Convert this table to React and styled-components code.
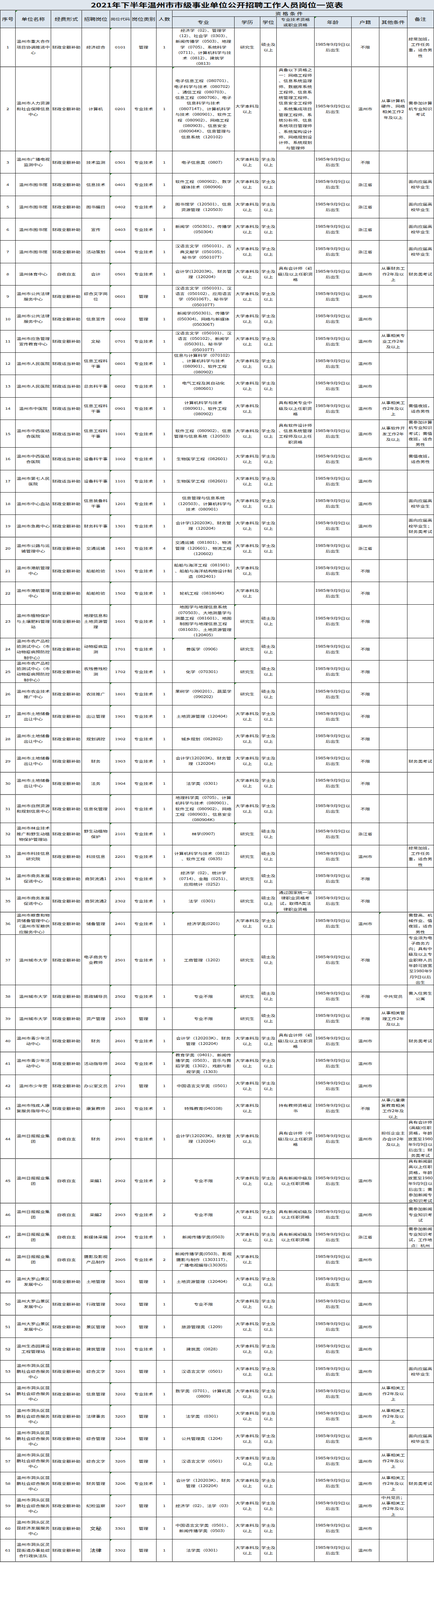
import React from 'react';
import styled, { createGlobalStyle, css } from 'styled-components';

const GlobalStyle = createGlobalStyle`
  html, body {
    margin: 0;
    padding: 0;
    background: #fff;
  }
  body {
    font-family: "Noto Sans CJK SC", "Noto Sans", sans-serif;
    color: #0c0c0c;
  }
`;

// the capture frame only gets 4000px of height, so vertical sizes are
// measured off the sheet and scaled into it; widths stay as measured
const S = 4000 / 5308;
const K = 0.68; // glyphs in the sheet are squat
const LINE = 19.02 * S;
const COLS = '39px 91px 79px 71.5px 54px 65.5px 41px 159px 66px 42px 96.5px 95px 71.5px 71.5px 68px';

const Page = styled.div`
  width: 1112px;
  overflow: hidden;
`;

const Text = styled.span`
  display: inline-block;
  line-height: ${LINE / K}px;
  transform: scaleY(${K});
  white-space: pre;
  text-align: center;
`;

const Title = styled.h1`
  margin: 0;
  height: ${33 * S}px;
  display: flex;
  align-items: center;
  justify-content: center;
  overflow: hidden;
  background: #dfe6ee;
  font-size: 22.8px;
  font-weight: 700;
  color: #0a0a0a;
`;

const Head = styled.div`
  display: grid;
  grid-template-columns: ${COLS};
  grid-template-rows: ${22 * S}px 1fr;
  height: ${62 * S}px;
  box-sizing: border-box;
  overflow: hidden;
  background: #dde6ef;
  border-top: 2px solid #7d7d7d;
  border-left: 1px solid #1a1a1a;
  border-bottom: 1px solid #1a1a1a;
`;

const mark = css`
  &::before {
    content: '';
    position: absolute;
    top: 0;
    left: 0;
    border-top: 4px solid #2f8f2f;
    border-right: 5px solid transparent;
  }
`;

const HeadCell = styled.div`
  position: relative;
  grid-column: ${p => p.$col};
  grid-row: ${p => p.$row};
  min-height: 0;
  display: flex;
  align-items: center;
  justify-content: center;
  border-right: 1px solid #1a1a1a;
  border-bottom: ${p => (p.$under ? '1px solid #1a1a1a' : 'none')};
  font-size: ${p => (p.$small ? '12.4px' : '15px')};
  letter-spacing: ${p => (p.$spaced ? '3.5px' : '0')};
  ${p => p.$mark && mark}
`;

const Row = styled.div`
  display: grid;
  grid-template-columns: ${COLS};
  grid-template-rows: 100%;
  height: ${p => p.$h}px;
  box-sizing: border-box;
  overflow: hidden;
  border-left: 1px solid #1a1a1a;
  border-bottom: ${p => (p.$thick ? '2px solid #6b6b6b' : '1px solid #1a1a1a')};
`;

const Cell = styled.div`
  position: relative;
  min-height: 0;
  display: flex;
  align-items: center;
  justify-content: center;
  border-right: 1px solid #1a1a1a;
  font-size: ${p => (p.$big ? '15px' : '12.2px')};
  ${p => p.$mark && mark}
`;

const AGE = '1985年9月9日以|后出生';
const BK = '大学本科及|以上';
const XS = '学士及|以上';
const SS = '硕士及|以上';
const QE = '财政全额补助';
const QS = '财政适当补助';
const ZS = '自收自支';
const JS = '专业技术';
const GL = '管理';
const YJS = '研究生';
const WZ = '温州市';
const BX = '不限';
const ZJ = '浙江省';
const GRAD = '面向应届高|校毕业生';
const WORK2 = '从事相关工|作2年及以|上';
const CW = '财务类考试';

const LAND = '温州市土地储备|出让中心';
const NCP = '温州市农产品检|验测试中心（市|动物疫病预防控|制中心）';
const KP = '温州市洞头区昆|鹏社会综合服务|中心';
const RB = '温州日报报业集|团';
const DLS = '温州大罗山景区|发展中心';

const ROWS = [
  ['1', '温州市重大合作|项目协调推进中|心', QE, '经济综合', '0101', GL, '1', '经济学（02）、管理学|（12）、社会学（0303）、|新闻传播学（0503）、地理|学（0705）、系统科学|（0711）、计算机科学与技|术（0812）、建筑学|（0813）', YJS, SS, '', AGE, BX, '', '经常加班，|工作任务|重，适合男|性'],
  ['2', '温州市人力资源|和社会保障信息|中心', QE, '计算机', '0201', JS, '1', '电子信息工程（080701）、|电子科学与技术（080702）|、通信工程（080703）、|信息工程（080706）、电子|信息科学与技术|（080714T）、计算机科学|与技术（080901）、软件工|程（080902）、网络工程|（080903）、信息安全|（080904K）、信息管理与|信息系统（120102）', BK, '', '具备以下资格之|一：网络工程师|、信息系统监理|师、数据库系统|工程师、信息系|统管理工程师、|信息安全工程师|、系统集成项目|管理工程师、系|统分析师、信息|系统项目管理师|、系统架构设计|师、网络规划设|计师、系统规划|与管理师', AGE, WZ, '从事计算机|硬件、网络|相关工作2|年及以上', '需参加计算|机专业知识|考试'],
  ['3', '温州市广播电视|监测中心', QE, '技术监测', '0301', JS, '1', '电子信息类（0807）', BK, XS, '', AGE, BX, '', ''],
  ['4', '温州市图书馆', QE, '信息技术', '0401', JS, '1', '软件工程（080902）、数字|媒体技术（080906）', BK, XS, '', AGE, ZJ, '', GRAD],
  ['5', '温州市图书馆', QE, '图书编目', '0402', JS, '2', '图书馆学（120501）、信息|资源管理（120503）', BK, XS, '', AGE, ZJ, '', GRAD],
  ['6', '温州市图书馆', QE, '宣传', '0403', JS, '1', '新闻学（050301）、传播学|（050304）', BK, XS, '', AGE, ZJ, '', GRAD],
  ['7', '温州市图书馆', QE, '活动策划', '0404', JS, '1', '汉语言文学（050101）、古|典文献学（050105）、|秘书学（050107T）', BK, XS, '', AGE, ZJ, '', GRAD],
  ['8', '温州体育中心', ZS, '会计', '0501', JS, '1', '会计学(120203K)、 财务管|理（120204）', BK, XS, '具有会计师（初|级)及以上任职资|格', AGE, WZ, '从事财务工|作2年及以|上', CW],
  ['9', '温州市公共法律|服务中心', QE, '综合文字岗|位', '0601', GL, '1', '汉语言文学（050101）、汉|语言（050102）、应用语言|学（050106T）、秘书学|（050107T）', BK, XS, '', AGE, WZ, '', ''],
  ['10', '温州市公共法律|服务中心', QE, '信息宣传', '0602', GL, '1', '新闻学(050301)、传播学|(050304)、网络与新媒体|(050306T)', BK, XS, '', AGE, WZ, '', ''],
  ['11', '温州市应急管理|宣传教育中心', QE, '文秘', '0701', JS, '1', '汉语言文学（050101）、汉|语言（050102）、新闻学|(050301)、秘书学|(050107T)', BK, XS, '', AGE, WZ, '从事相关专|业工作2年|及以上', ''],
  ['12', '温州市人民医院', QS, '信息工程科|干事', '0801', JS, '1', '信息与计算科学（070102）|、计算机科学与技术|（080901）、软件工程|（080902）', BK, XS, '', AGE, WZ, '', ''],
  ['13', '温州市人民医院', QS, '总务科干事', '0802', JS, '1', '电气工程及其自动化|（080601）', BK, XS, '', AGE, WZ, '', ''],
  ['14', '温州市中医院', QS, '信息工程科|干事', '0901', JS, '1', '计算机科学与技术|（080901）、软件工程|（080902）', BK, '', '具有相关专业中|级及以上任职资|格', AGE, WZ, WORK2, '需值夜班，|适合男性'],
  ['15', '温州市中西医结|合医院', QS, '信息工程科|干事', '1001', JS, '1', '软件工程（080902）、信息|管理与信息系统（120503）', BK, XS, '具有软件设计师|、信息系统管理|工程师及以上任|职资格', AGE, WZ, '从事软件开|发工作2年|及以上', '需参加计算|机专业知识|考试；需值|夜班，适合|男性'],
  ['16', '温州市中西医结|合医院', QS, '设备科干事', '1002', JS, '1', '生物医学工程（082601）', BK, XS, '', AGE, WZ, '', '需值夜班，|适合男性'],
  ['17', '温州市第七人民|医院', QS, '设备科干事', '1101', JS, '1', '生物医学工程（082601）', BK, XS, '', AGE, WZ, '', ''],
  ['18', '温州市中心血站', QE, '信息装备科|干事', '1201', JS, '1', '信息管理与信息系统|（120503）、计算机科学与|技术（080901）', BK, XS, '', AGE, WZ, '', GRAD],
  ['19', '温州市急救中心', QE, '财务科干事', '1301', JS, '1', '会计学(120203K)、财务管|理（120204）', BK, XS, '', AGE, WZ, '', '面向应届高|校毕业生；|财务类考试'],
  ['20', '温州市公路与运|输管理中心', QE, '交通运输', '1401', JS, '4', '交通运输（081801）、物流|管理（120601）、物流工程|（120602）', BK, XS, '', AGE, ZJ, '', ''],
  ['21', '温州市港航管理|中心', QE, '船舶检验', '1501', JS, '1', '船舶与海洋工程（081901）|、船舶与海洋结构物设计制|造（082401）', BK, '', '', AGE, BX, '', ''],
  ['22', '温州市港航管理|中心', QE, '船舶检验', '1502', JS, '1', '轮机工程（081804K）', BK, '', '', AGE, BX, '', ''],
  ['23', '温州市植物保护|与土壤肥料管理|站', QE, '地理信息和|土地资源管|理', '1601', JS, '1', '地图学与地理信息系统|（070503）、大地测量学与|测量工程（081601）、地图|制图学与地理信息工程|（081603）、土地资源管理|（120405）', YJS, SS, '', AGE, BX, '', ''],
  ['24', NCP, QE, '动物疫病监|测', '1701', JS, '1', '兽医学（0906）', YJS, SS, '', AGE, BX, '', ''],
  ['25', NCP, QE, '农残兽残检|测', '1702', JS, '1', '化学（070301）', YJS, SS, '', AGE, BX, '', ''],
  ['26', '温州市农业技术|推广中心', QE, '农技推广', '1801', JS, '1', '果树学（090201）、蔬菜学|（090202）', YJS, SS, '', AGE, BX, '', ''],
  ['27', LAND, QE, '出让管理', '1901', JS, '1', '土地资源管理（120404）', BK, XS, '', AGE, BX, '', ''],
  ['28', LAND, QE, '规划调控', '1902', JS, '1', '城乡规划（082802）', BK, XS, '', AGE, BX, '', ''],
  ['29', LAND, QE, '财务', '1903', JS, '1', '会计学(120203K)、财务管|理（120204）', BK, XS, '', AGE, BX, '', CW],
  ['30', LAND, QE, '法务', '1904', JS, '1', '法学类（0301）', BK, XS, '', AGE, BX, '', ''],
  ['31', '温州市自然资源|和规划信息中心', QE, '信息化管理', '2001', JS, '1', '地理科学类（0705）、计算|机科学与技术（080901）、|软件工程（080902）、网络|工程（080903）、信息安全|（080904K）', BK, XS, '', AGE, BX, '', ''],
  ['32', '温州市林业技术|推广和野生动植|物保护管理站', QE, '野生动植物|保护', '2101', JS, '1', '林学(0907)', YJS, SS, '', AGE, ZJ, '', ''],
  ['33', '温州市科技信息|研究院', QE, '科技信息', '2201', JS, '1', '计算机科学与技术（0812）|、软件工程（0835）', YJS, SS, '', AGE, WZ, '', '经常加班，|工作任务|重，适合男|性'],
  ['34', '温州市商务发展|促进中心', QE, '商贸流通1', '2301', JS, '3', '经济学（02）、统计学|（0714）、金融（0251）、|应用统计（0252）', YJS, SS, '', AGE, BX, '', ''],
  ['35', '温州市商务发展|促进中心', QE, '商贸流通2', '2302', JS, '1', '法学（0301）', YJS, SS, '通过国家统一法|律职业资格考|试，取得A类法|律职业资格', AGE, BX, '', ''],
  ['36', '温州市粮食和物|资储备管理中心|（温州市军粮供|应服务中心）', QE, '储备管理', '2401', JS, '1', '经济学类(0201)', BK, XS, '', AGE, WZ, '', '需登高、机|械作业、值|夜班，适合|男性'],
  ['37', '温州城市大学', QE, '电子商务专|业教师', '2501', JS, '1', '工商管理（1202）', YJS, SS, '', AGE, BX, '', '专业须为电|子商务方|向；具有中|级及以上专|业职称人员|年龄可放宽|至1980年9|月9日以后|出生'],
  ['38', '温州城市大学', QE, '思政辅导员', '2502', JS, '1', '专业不限', YJS, SS, '', AGE, BX, '中共党员', '需入住男生|公寓'],
  ['39', '温州城市大学', QE, '资产管理', '2503', GL, '1', '专业不限', YJS, SS, '', AGE, BX, '从事相关管|理工作2年|及以上', ''],
  ['40', '温州市青少年活|动中心', QE, '财务', '2601', JS, '1', '会计学（120203K）、财务|管理（120204）', BK, XS, '具有会计师（初|级)及以上任职资|格', AGE, WZ, '', CW],
  ['41', '温州市青少年活|动中心', QE, '活动指导师', '2602', JS, '1', '教育学类（0401）、新闻传|播学类（0503）、音乐与舞|蹈学类（1302）、戏剧与影|视学类（1303）', BK, XS, '', AGE, WZ, '', ''],
  ['42', '温州市少年宫', QE, '办公室文员', '2701', GL, '1', '中国语言文学类（0501）', BK, XS, '', AGE, WZ, '', ''],
  ['43', '温州市残疾人康|复服务指导中心', QE, '康复教师', '2801', JS, '1', '特殊教育(040108)', BK, '', '持有教师资格证|书', AGE, BX, '从事儿童康|复教育相关|工作2年及|以上', ''],
  ['44', RB, ZS, '财务', '2901', JS, '1', '会计学(120203K)、财务管|理（120204）', BK, '', '具有会计师（中|级)及以上任职资|格', AGE, WZ, '担任企业主|办会计2年|及以上', '具有会计师|(高级)任职|资格，年龄|放宽至1980|年9月9日以|后出生；财|务类考试'],
  ['45', RB, ZS, '采编1', '2902', JS, '2', '专业不限', BK, XS, '具有新闻中级及|以上任职资格', AGE, WZ, '', '具有新闻副|高以上任职|资格，年龄|放宽至1980|年9月9日以|后出生；需|参加新闻专|业知识考试'],
  ['46', RB, ZS, '采编2', '2903', JS, '2', '专业不限', BK, XS, '具有新闻初级及|以上任职资格', AGE, WZ, '', '需参加新闻|专业知识考|试'],
  ['47', RB, ZS, '新媒体采编', '2904', JS, '1', '新闻传播学类(0503)', BK, XS, '具有新闻初级及|以上任职资格', AGE, ZJ, '', '需参加新闻|专业知识考|试，工作地|点：杭州'],
  ['48', RB, ZS, '摄影及影视|产品制作', '2905', JS, '2', '新闻传播学类(0503)、影视|摄影与制作（130311T）、|广播电视编导(130305)', BK, '', '', AGE, WZ, '', ''],
  ['49', DLS, QE, '土地管理', '3001', GL, '1', '土地资源管理（120404）', BK, XS, '', AGE, WZ, '', ''],
  ['50', DLS, QE, '行政管理', '3002', GL, '1', '专业不限', BK, XS, '', AGE, WZ, '', ''],
  ['51', DLS, QE, '景区管理', '3003', GL, '1', '旅游管理类（1209）', BK, XS, '', AGE, WZ, '', ''],
  ['52', '温州生态园建设|工程管理站', QE, '建筑管理', '3101', JS, '1', '建筑类（0828）', BK, XS, '', AGE, WZ, '', ''],
  ['53', KP, QE, '综合文字', '3201', GL, '1', '汉语言文学（0501）', BK, XS, '', AGE, WZ, '', GRAD],
  ['54', KP, QE, '信息管理', '3202', JS, '1', '数学类（0701）、计算机类|（0809）', BK, XS, '', AGE, WZ, WORK2, ''],
  ['55', KP, QE, '法律事务', '3203', GL, '1', '法学类 （0301）', BK, XS, '', AGE, WZ, WORK2, ''],
  ['56', KP, QE, '综合管理', '3204', GL, '1', '公共管理类（1204）', BK, XS, '', AGE, WZ, '', GRAD],
  ['57', KP, QE, '综合文字', '3205', GL, '1', '汉语言文学（0501）', BK, XS, '', AGE, WZ, WORK2, ''],
  ['58', KP, QE, '财务管理', '3206', JS, '1', '会计学（120203K）、财务|管理（120204）', BK, XS, '', AGE, WZ, WORK2, CW],
  ['59', KP, QE, '纪检监察', '3207', GL, '1', '经济学（02）、法学（03）', BK, XS, '', AGE, WZ, '中共党员；|从事相关工|作2年及以|上', ''],
  ['60', '温州市洞头区灵|昆经济发展服务|中心', QE, '文秘', '3301', GL, '1', '中国语言文学类（0501）、|新闻传播学类（0503）', BK, XS, '', AGE, WZ, '', ''],
  ['61', '温州市洞头区灵|昆街道办事处综|合行政执法队', QE, '法律', '3302', GL, '1', '法学类（0301）', BK, XS, '', AGE, WZ, '', ''],
];

// little green corner flags (Excel "number as text" markers), beyond the code column
const EXTRA_MARKS = {
  2: [7], 23: [8], 24: [7, 8], 25: [8], 26: [8], 32: [8], 33: [8], 34: [8], 35: [8],
  36: [7, 10, 13], 37: [8], 38: [8], 39: [8], 41: [7],
};
const THICK = [1, 19, 29, 30, 35, 39, 40, 44, 45, 49, 50, 61];
const BIG_POST = [60, 61];

function TableRow({ cells }) {
  const no = Number(cells[0]);
  const marks = [4, ...(EXTRA_MARKS[no] || [])];
  const lines = cells.reduce((m, c) => Math.max(m, c.split('|').length), 4);
  return (
    <Row $h={lines * LINE} $thick={THICK.includes(no)}>
      {cells.map((c, i) => (
        <Cell key={i} $mark={marks.includes(i)} $big={i === 3 && BIG_POST.includes(no)}>
          {c && <Text>{c.split('|').join('\n')}</Text>}
        </Cell>
      ))}
    </Row>
  );
}

const HEAD = [
  { col: '1', row: '1 / 3', text: '序号' },
  { col: '2', row: '1 / 3', text: '单位名称', mark: true },
  { col: '3', row: '1 / 3', text: '经费形式' },
  { col: '4', row: '1 / 3', text: '招聘岗位' },
  { col: '5', row: '1 / 3', text: '岗位代码', small: true },
  { col: '6', row: '1 / 3', text: '岗位类别' },
  { col: '7', row: '1 / 3', text: '人数' },
  { col: '8 / 15', row: '1', text: '资格条件', under: true, spaced: true },
  { col: '8', row: '2', text: '专业' },
  { col: '9', row: '2', text: '学历' },
  { col: '10', row: '2', text: '学位' },
  { col: '11', row: '2', text: '专业技术资格\n或职业资格', small: true },
  { col: '12', row: '2', text: '年龄', mark: true },
  { col: '13', row: '2', text: '户籍' },
  { col: '14', row: '2', text: '其他条件' },
  { col: '15', row: '1 / 3', text: '备注' },
];

export default function App() {
  return (
    <Page>
      <GlobalStyle />
      <Title>
        <Text>2021年下半年温州市市级事业单位公开招聘工作人员岗位一览表</Text>
      </Title>
      <Head>
        {HEAD.map(h => (
          <HeadCell
            key={h.col + h.row}
            $col={h.col}
            $row={h.row}
            $mark={h.mark}
            $small={h.small}
            $under={h.under}
            $spaced={h.spaced}
          >
            <Text>{h.text}</Text>
          </HeadCell>
        ))}
      </Head>
      {ROWS.map(r => (
        <TableRow key={r[0]} cells={r} />
      ))}
    </Page>
  );
}
